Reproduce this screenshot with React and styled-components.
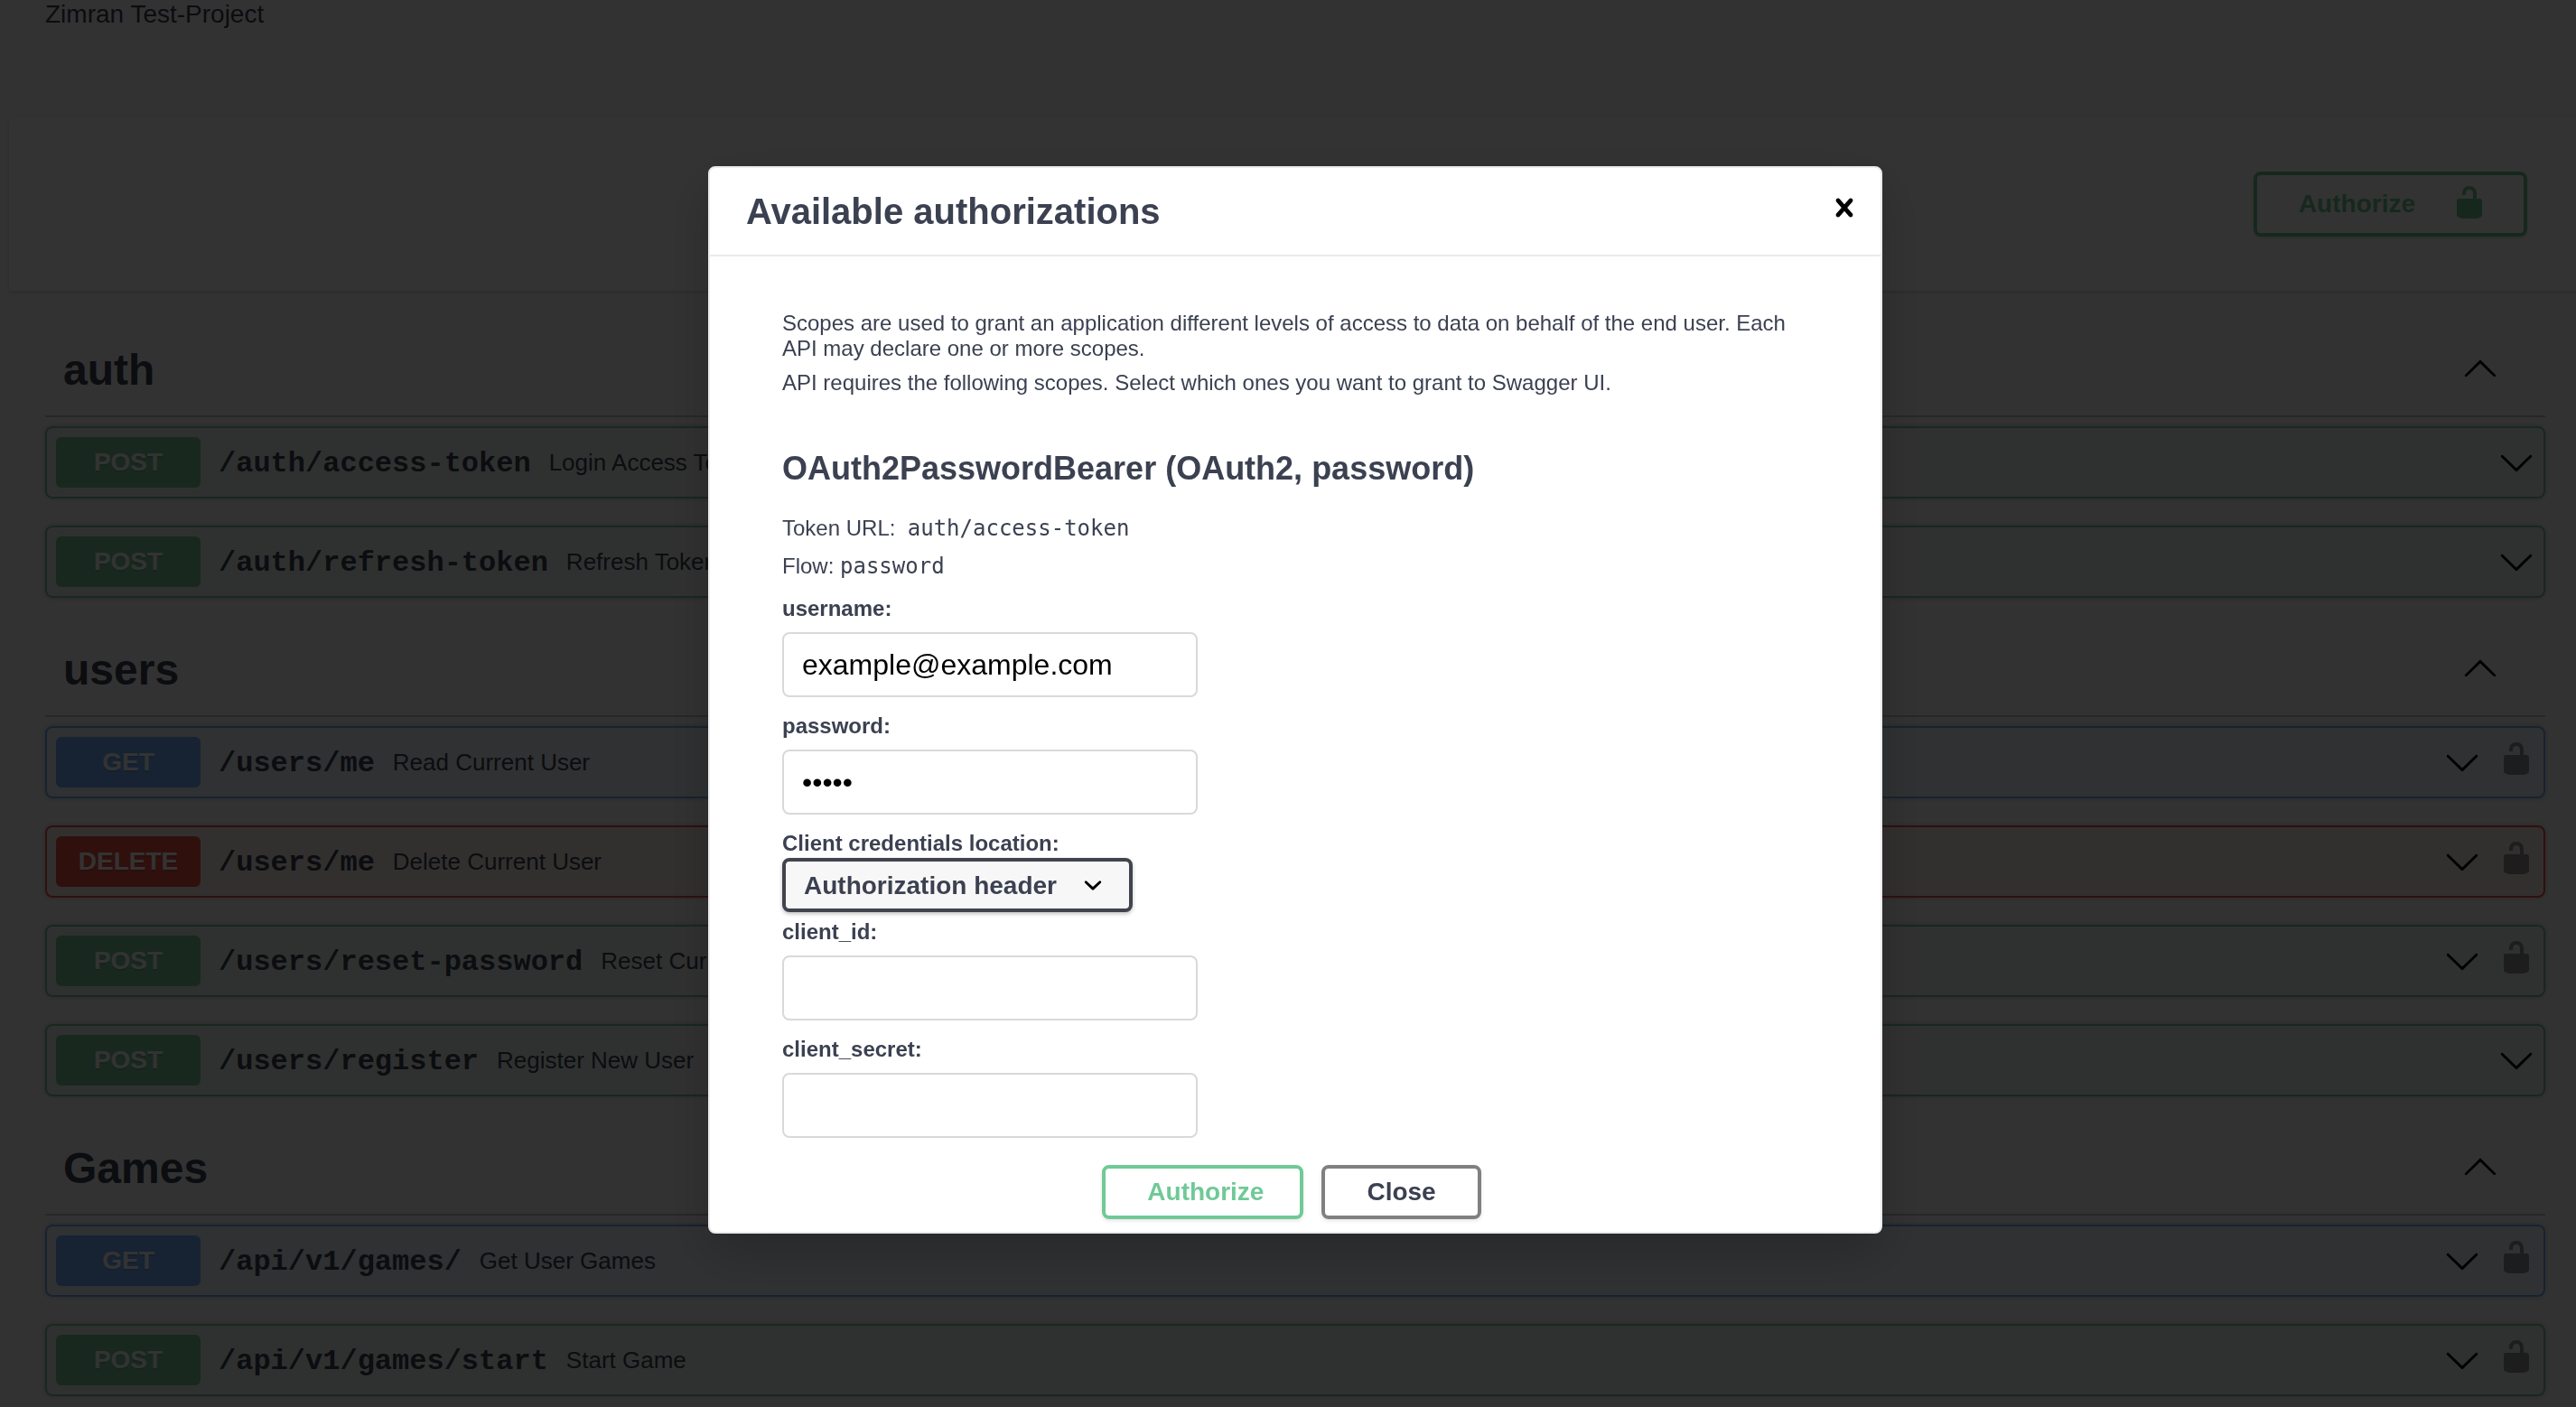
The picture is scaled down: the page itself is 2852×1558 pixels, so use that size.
import React, { useState } from "react";
import styled, { createGlobalStyle } from "styled-components";

const sans = '"Liberation Sans", Arial, Helvetica, sans-serif';
const mono = '"Liberation Mono", "Courier New", monospace';
const codeFont = '"DejaVu Sans Mono", "Liberation Mono", monospace';

const ink = "#3b4151";
const green = "#70c997";

const methods = {
  post: { color: "#77c898", tint: "rgba(119, 200, 152, 0.1)" },
  get: { color: "#75aefa", tint: "rgba(117, 174, 250, 0.1)" },
  delete: { color: "#e84f43", tint: "rgba(240, 150, 80, 0.1)" },
};

const GlobalStyle = createGlobalStyle`
  *, *::before, *::after { box-sizing: border-box; }
  html, body { height: 100%; }
  body {
    margin: 0;
    overflow: hidden;
    background: #fafafa;
    color: ${ink};
    font-family: ${sans};
  }
  h1, h2, h3, h4, p { margin: 0; }
  button, input, select { font-family: inherit; }
`;

const Page = styled.div`
  height: 100vh;
  margin-right: -16px;
  overflow: hidden;
`;

const Info = styled.header`
  height: 130px;
  padding: 0 50px;
  font-size: 28px;
  line-height: 32px;
`;

const SchemeBar = styled.section`
  display: flex;
  justify-content: flex-end;
  margin: 0 10px 38px;
  padding: 60px;
  background: #fff;
  box-shadow: 0 2px 4px rgba(0, 0, 0, 0.15);
`;

const Button = styled.button`
  display: flex;
  align-items: center;
  height: 60px;
  padding: 0 46px;
  border: 4px solid #808080;
  border-radius: 8px;
  background: transparent;
  box-shadow: 0 2px 4px rgba(0, 0, 0, 0.1);
  color: ${ink};
  font-size: 28px;
  font-weight: 700;
`;

const AuthorizeButton = styled(Button)`
  padding-right: 40px;
  border-color: ${green};
  color: ${green};
`;

const OpenAuthButton = styled(AuthorizeButton)`
  gap: 40px;
  height: 72px;
  padding-bottom: 4px;
  line-height: 32px;

  span {
    padding-top: 4px;
  }
`;

const Sections = styled.main`
  padding: 0 50px;
`;

const TagHeader = styled.h3`
  display: flex;
  align-items: center;
  justify-content: space-between;
  height: 102px;
  margin-bottom: 10px;
  padding: 0 52px 0 20px;
  border-bottom: 2px solid rgba(59, 65, 81, 0.3);
  font-size: 48px;
  line-height: 56px;

  button {
    padding-bottom: 6px;
  }
`;

const IconButton = styled.button`
  display: flex;
  padding: 0;
  border: 0;
  background: none;
  color: #000;
  opacity: ${(p) => (p.$faded ? 0.4 : 1)};
`;

const Operation = styled.article`
  display: flex;
  align-items: center;
  margin-bottom: 30px;
  padding: 10px;
  border: 2px solid ${(p) => methods[p.$method].color};
  border-radius: 8px;
  background: ${(p) => methods[p.$method].tint};
  box-shadow: 0 0 6px rgba(0, 0, 0, 0.19);
`;

const Method = styled.span`
  flex: none;
  width: 160px;
  border-radius: 6px;
  background: ${(p) => methods[p.$method].color};
  color: #fff;
  font-size: 28px;
  font-weight: 700;
  line-height: 56px;
  text-align: center;
  text-shadow: 0 2px 0 rgba(0, 0, 0, 0.1);
  text-transform: uppercase;
`;

const Path = styled.span`
  flex: none;
  padding: 2px 20px 0;
  font-family: ${mono};
  font-size: 32px;
  font-weight: 700;
`;

const Summary = styled.span`
  flex: 1;
  font-size: 26px;
`;

const Controls = styled.div`
  display: flex;
  align-items: center;
  gap: 20px;
`;

const LockSlot = styled.span`
  display: flex;
  padding-bottom: 8px;
`;

const Backdrop = styled.div`
  position: fixed;
  inset: 0 -16px 0 0;
  display: flex;
  align-items: flex-start;
  justify-content: center;
  padding-top: 184px;
  background: rgba(0, 0, 0, 0.8);
`;

const Dialog = styled.div`
  width: 1300px;
  border: 2px solid #ebebeb;
  border-radius: 8px;
  background: #fff;
  box-shadow: 0 20px 60px rgba(0, 0, 0, 0.2);
`;

const DialogHeader = styled.div`
  display: flex;
  align-items: center;
  justify-content: space-between;
  height: 98px;
  padding: 0 20px 8px 40px;
  border-bottom: 2px solid #ebebeb;
`;

const DialogTitle = styled.h3`
  padding-top: 8px;
  font-size: 40px;
  line-height: 46px;
`;

const DialogBody = styled.form`
  padding: 60px 40px 14px;
`;

const AuthContent = styled.div`
  padding: 0 40px;
`;

const Note = styled.p`
  margin-bottom: 10px;
  font-size: 24px;
  line-height: 28px;
`;

const SchemeTitle = styled.h4`
  padding: 50px 0 24px;
  font-size: 36px;
  line-height: 42px;
`;

const Details = styled.div`
  padding-bottom: 4px;
`;

const Detail = styled.p`
  font-size: 24px;
  line-height: 42px;
  white-space: pre;
`;

const Code = styled.code`
  font-family: ${codeFont};
  font-size: 24px;
`;

const Label = styled.label`
  display: block;
  font-size: 24px;
  font-weight: 700;
  line-height: 28px;
`;

const Field = styled.div`
  padding-top: ${(p) => (p.$compact ? 8 : 18)}px;
`;

const TextInput = styled.input`
  display: block;
  width: 460px;
  height: 72px;
  margin: 12px 0 0;
  padding: 0 20px;
  border: 2px solid #d9d9d9;
  border-radius: 8px;
  background: #fff;
  color: #000;
  font-size: 32px;
`;

const SelectBox = styled.div`
  position: relative;
  width: 388px;
  margin-top: 2px;

  svg {
    position: absolute;
    top: 10px;
    right: 24px;
    color: #000;
    pointer-events: none;
  }
`;

const Select = styled.select`
  display: block;
  width: 100%;
  height: 60px;
  padding: 0 80px 0 20px;
  appearance: none;
  border: 4px solid #41444e;
  border-radius: 8px;
  background: #f7f7f7;
  box-shadow: 0 2px 4px rgba(0, 0, 0, 0.25);
  color: ${ink};
  font-size: 28px;
  font-weight: 700;
`;

const Actions = styled.div`
  display: flex;
  justify-content: center;
  gap: 20px;
  padding: 30px 8px 0 0;
`;

function Icon({ d }) {
  return (
    <svg width="40" height="40" viewBox="0 0 20 20" fill="currentColor" aria-hidden="true">
      <path d={d} />
    </svg>
  );
}

const icons = {
  unlocked:
    "M15.8 8H14V5.6C14 2.703 12.665 1 10 1 7.334 1 6 2.703 6 5.6V6h2v-.801C8 3.754 8.797 3 10 3c1.203 0 2 .754 2 2.199V8H4c-.553 0-1 .646-1 1.199V17c0 .549.428 1.139.951 1.307l1.197.387C5.672 18.861 6.55 19 7.1 19h5.8c.549 0 1.428-.139 1.951-.307l1.196-.387c.524-.167.953-.757.953-1.306V9.199C17 8.646 16.352 8 15.8 8z",
  down: "M17.418 6.109c.272-.268.709-.268.979 0s.271.701 0 .969l-7.908 7.83c-.27.268-.707.268-.979 0l-7.908-7.83c-.27-.268-.27-.701 0-.969.271-.268.709-.268.979 0L10 13.25l7.418-7.141z",
  up: "M17.418 14.908c.272.27.709.27.979 0s.271-.701 0-.969l-7.908-7.83c-.27-.268-.707-.268-.979 0l-7.908 7.83c-.27.268-.27.701 0 .969.271.268.709.268.979 0L10 7.767l7.418 7.141z",
  close:
    "M14.348 14.849c-.469.469-1.229.469-1.697 0L10 11.819l-2.651 3.029c-.469.469-1.229.469-1.697 0-.469-.469-.469-1.229 0-1.697l2.758-3.15-2.759-3.152c-.469-.469-.469-1.228 0-1.697.469-.469 1.228-.469 1.697 0L10 8.183l2.651-3.031c.469-.469 1.228-.469 1.697 0 .469.469.469 1.229 0 1.697l-2.758 3.152 2.758 3.15c.469.469.469 1.229 0 1.698z",
  caret:
    "M13.418 7.859a.695.695 0 01.978 0 .68.68 0 010 .969l-3.908 3.83a.697.697 0 01-.979 0l-3.908-3.83a.68.68 0 010-.969.695.695 0 01.978 0L10 11l3.418-3.141z",
};

const groups = [
  {
    tag: "auth",
    operations: [
      { method: "post", path: "/auth/access-token", summary: "Login Access Token" },
      { method: "post", path: "/auth/refresh-token", summary: "Refresh Token" },
    ],
  },
  {
    tag: "users",
    operations: [
      { method: "get", path: "/users/me", summary: "Read Current User", secured: true },
      { method: "delete", path: "/users/me", summary: "Delete Current User", secured: true },
      { method: "post", path: "/users/reset-password", summary: "Reset Current User Password", secured: true },
      { method: "post", path: "/users/register", summary: "Register New User" },
    ],
  },
  {
    tag: "Games",
    operations: [
      { method: "get", path: "/api/v1/games/", summary: "Get User Games", secured: true },
      { method: "post", path: "/api/v1/games/start", summary: "Start Game", secured: true },
    ],
  },
];

function OperationRow({ method, path, summary, secured }) {
  return (
    <Operation $method={method}>
      <Method $method={method}>{method}</Method>
      <Path>{path}</Path>
      <Summary>{summary}</Summary>
      <Controls>
        <IconButton type="button" aria-label={`Expand ${path}`}>
          <Icon d={icons.down} />
        </IconButton>
        {secured && (
          <LockSlot>
            <IconButton type="button" $faded aria-label={`Authorize ${path}`}>
              <Icon d={icons.unlocked} />
            </IconButton>
          </LockSlot>
        )}
      </Controls>
    </Operation>
  );
}

function TextField({ id, label, compact, ...rest }) {
  return (
    <Field $compact={compact}>
      <Label htmlFor={id}>{label}</Label>
      <TextInput id={id} autoComplete="off" {...rest} />
    </Field>
  );
}

function AuthDialog() {
  const [username, setUsername] = useState("example@example.com");
  const [password, setPassword] = useState("admin");
  return (
    <Backdrop>
      <Dialog role="dialog" aria-labelledby="dialog-title">
        <DialogHeader>
          <DialogTitle id="dialog-title">Available authorizations</DialogTitle>
          <IconButton type="button" aria-label="Close dialog">
            <Icon d={icons.close} />
          </IconButton>
        </DialogHeader>
        <DialogBody onSubmit={(e) => e.preventDefault()}>
          <AuthContent>
            <Note>
              Scopes are used to grant an application different levels of access to data on behalf of
              the end user. Each API may declare one or more scopes.
            </Note>
            <Note>
              API requires the following scopes. Select which ones you want to grant to Swagger UI.
            </Note>
            <SchemeTitle>OAuth2PasswordBearer (OAuth2, password)</SchemeTitle>
            <Details>
              <Detail>
                {"Token URL:  "}
                <Code>auth/access-token</Code>
              </Detail>
              <Detail>
                {"Flow: "}
                <Code>password</Code>
              </Detail>
            </Details>
            <TextField
              id="username"
              label="username:"
              compact
              value={username}
              onChange={(e) => setUsername(e.target.value)}
            />
            <TextField
              id="password"
              label="password:"
              type="password"
              value={password}
              onChange={(e) => setPassword(e.target.value)}
            />
            <Field>
              <Label htmlFor="location">Client credentials location:</Label>
              <SelectBox>
                <Select id="location" defaultValue="header">
                  <option value="header">Authorization header</option>
                  <option value="body">Request body</option>
                </Select>
                <Icon d={icons.caret} />
              </SelectBox>
            </Field>
            <TextField id="client_id" label="client_id:" compact />
            <TextField id="client_secret" label="client_secret:" />
          </AuthContent>
          <Actions>
            <AuthorizeButton type="submit">Authorize</AuthorizeButton>
            <Button type="button">Close</Button>
          </Actions>
        </DialogBody>
      </Dialog>
    </Backdrop>
  );
}

export default function App() {
  return (
    <>
      <GlobalStyle />
      <Page>
        <Info>
          <p>Zimran Test-Project</p>
        </Info>
        <SchemeBar>
          <OpenAuthButton type="button">
            <span>Authorize</span>
            <Icon d={icons.unlocked} />
          </OpenAuthButton>
        </SchemeBar>
        <Sections>
          {groups.map(({ tag, operations }) => (
            <section key={tag}>
              <TagHeader>
                {tag}
                <IconButton type="button" aria-label={`Collapse ${tag}`}>
                  <Icon d={icons.up} />
                </IconButton>
              </TagHeader>
              {operations.map((op) => (
                <OperationRow key={op.method + op.path} {...op} />
              ))}
            </section>
          ))}
        </Sections>
      </Page>
      <AuthDialog />
    </>
  );
}
